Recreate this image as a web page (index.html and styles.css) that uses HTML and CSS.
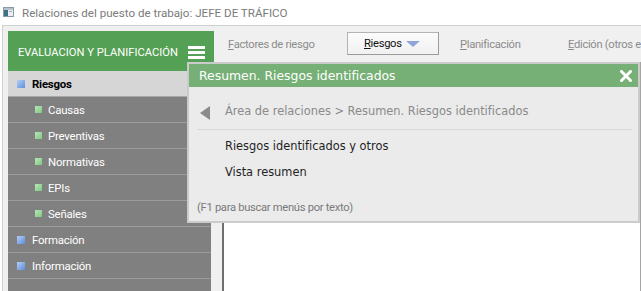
FILE: index.html
```html
<!DOCTYPE html>
<html lang="es">
<head>
<meta charset="utf-8">
<title>Relaciones del puesto de trabajo</title>
<link rel="stylesheet" href="styles.css">
</head>
<body>
<div class="titlebar">
  <svg class="appicon" width="11" height="10" viewBox="0 0 11 10">
    <rect x="0.5" y="0.5" width="10" height="9" fill="#e9eef2" stroke="#8c9aa6"/>
    <rect x="1" y="1" width="9" height="2" fill="#b8c4cc"/>
    <rect x="1" y="3" width="4" height="6" fill="#3f6f82"/>
    <rect x="6" y="4" width="3" height="1" fill="#9fb0bb"/>
  </svg>
  <span class="title">Relaciones del puesto de trabajo: JEFE DE TRÁFICO</span>
</div>
<div class="window">
  <aside class="side">
    <div class="side-head">
      <span class="side-title">EVALUACION Y PLANIFICACIÓN</span>
      <span class="burger"><i></i><i></i><i></i></span>
    </div>
    <ul class="nav">
      <li class="item sel"><span class="sq blue"></span>Riesgos</li>
      <li class="item sub"><span class="sq green"></span>Causas</li>
      <li class="item sub"><span class="sq green"></span>Preventivas</li>
      <li class="item sub"><span class="sq green"></span>Normativas</li>
      <li class="item sub"><span class="sq green"></span>EPIs</li>
      <li class="item sub"><span class="sq green"></span>Señales</li>
      <li class="item"><span class="sq blue"></span>Formación</li>
      <li class="item"><span class="sq blue"></span>Información</li>
      <li class="item filler"></li>
    </ul>
  </aside>
  <div class="main">
    <div class="toolbar">
      <span class="tb-item first"><u>F</u>actores de riesgo</span>
      <span class="tb-button"><span><u>R</u>iesgos</span><i class="tri"></i></span>
      <span class="tb-item plan"><u>P</u>lanificación</span>
      <span class="tb-item last"><u>E</u>dición (otros e</span>
    </div>
    <div class="content"></div>
  </div>
  <div class="popup">
    <div class="pop-head">
      <span>Resumen. Riesgos identificados</span>
      <svg class="close" width="12" height="12" viewBox="0 0 12 12">
        <path d="M1.5 1.5 L10.5 10.5 M10.5 1.5 L1.5 10.5" stroke="#fff" stroke-width="3" stroke-linecap="square"/>
      </svg>
    </div>
    <div class="crumb">
      <i class="back"></i>
      <span>Área de relaciones &gt; Resumen. Riesgos identificados</span>
    </div>
    <div class="sep"></div>
    <ul class="pop-list">
      <li>Riesgos identificados y otros</li>
      <li>Vista resumen</li>
    </ul>
    <div class="hint">(F1 para buscar menús por texto)</div>
  </div>
</div>
</body>
</html>
```

FILE: styles.css
```css
* { box-sizing: border-box; }
html, body { margin: 0; padding: 0; }
body {
  width: 641px;
  height: 291px;
  overflow: hidden;
  background: #fff;
  font-family: Roboto, "Liberation Sans", sans-serif;
}
ul { list-style: none; margin: 0; padding: 0; }

.titlebar {
  height: 25px;
  display: flex;
  align-items: center;
  padding-left: 3px;
  background: #fff;
}
.appicon { display: block; margin-top: -1px; }
.title {
  margin-left: 8px;
  font-size: 11.6px;
  color: #7b7b7b;
}

.window {
  position: relative;
  margin-left: 2px;
  height: 266px;
  border-top: 1px solid #cfcfcf;
  border-left: 1px solid #cfcfcf;
  background: #f0f0f0;
  display: flex;
  padding-left: 5px;
}

.side {
  width: 206px;
  padding-top: 5px;
  display: flex;
  flex-direction: column;
}
.side-head {
  height: 40px;
  background: #54a054;
  display: flex;
  align-items: center;
  justify-content: space-between;
  padding-left: 10px;
  padding-right: 9px;
  color: #fff;
  font-size: 11.2px;
  white-space: nowrap;
}
.side-title { margin-top: 2px; }
.burger {
  display: flex;
  flex-direction: column;
  gap: 2px;
  margin-top: 2px;
}
.burger i {
  display: block;
  width: 17px;
  height: 3px;
  background: #fff;
}
.nav {
  flex: 1;
  width: 203px;
  background: #808080;
  display: flex;
  flex-direction: column;
}
.item {
  height: 26px;
  border-bottom: 1px solid #9c9c9c;
  display: flex;
  align-items: center;
  padding-left: 9px;
  color: #fff;
  font-size: 11.4px;
  letter-spacing: -0.2px;
}
.item.sel {
  background: #d6d6d6;
  color: #000;
  font-weight: 700;
  border-bottom-color: #a8a8a8;
}
.item.sub { padding-left: 27px; }
.item.filler { flex: 1; border-bottom: 0; }
.sq {
  display: inline-block;
  width: 8px;
  height: 8px;
  margin-right: 7px;
}
.sq.blue { background: linear-gradient(135deg, #b3cdf3, #5d8fdc); }
.sq.green {
  width: 7px;
  height: 7px;
  margin-right: 6px;
  background: linear-gradient(135deg, #b8e6b8, #7fc97f);
}

.main {
  flex: 1;
  min-width: 0;
  display: flex;
  flex-direction: column;
}
.toolbar {
  height: 36px;
  display: flex;
  align-items: center;
  font-size: 11.2px;
  letter-spacing: -0.3px;
  color: #8c8c8c;
  white-space: nowrap;
  overflow: hidden;
}
.tb-item.first { width: 133px; padding-left: 14px; flex: none; }
.tb-item.plan { width: 108px; margin-left: 21px; flex: none; }
.tb-item.last { flex: none; }
.tb-button {
  flex: none;
  width: 92px;
  height: 23px;
  margin-top: -1px;
  border: 1px solid #b4b4b4;
  border-right-color: #9c9c9c;
  border-bottom-color: #9c9c9c;
  background: linear-gradient(#fbfbfb, #f1f1f1);
  color: #111;
  display: flex;
  align-items: center;
  padding-left: 16px;
}
.tri {
  display: block;
  width: 0;
  height: 0;
  margin-left: 4px;
  margin-top: 1px;
  border-left: 7px solid transparent;
  border-right: 7px solid transparent;
  border-top: 6px solid #8fa6da;
}
.content {
  flex: 1;
  margin-left: 8px;
  background: #fff;
  border-left: 2px solid #6f6f6f;
  border-right: 1px solid #a5a5a5;
}

.popup {
  position: absolute;
  left: 184px;
  top: 36px;
  width: 453px;
  height: 161px;
  border: 2px solid #cbcbcb;
  background: #ebebeb;
  font-family: "DejaVu Sans", Verdana, sans-serif;
}
.pop-head {
  height: 23px;
  background: #76b076;
  color: #fff;
  font-size: 12.4px;
  display: flex;
  align-items: center;
  justify-content: space-between;
  padding-left: 10px;
  padding-right: 6px;
}
.close { display: block; }
.crumb {
  height: 42px;
  padding-top: 6px;
  padding-left: 11px;
  display: flex;
  align-items: center;
  color: #8a8a8a;
  font-size: 11.4px;
}
.back {
  display: block;
  width: 0;
  height: 0;
  margin-top: 3px;
  border-right: 10px solid #8b8b8b;
  border-top: 7px solid transparent;
  border-bottom: 7px solid transparent;
  margin-right: 15px;
}
.sep {
  height: 1px;
  background: #d9d9d9;
  margin: 0 6px 0 8px;
}
.pop-list {
  margin-top: 3px;
  padding-left: 36px;
  font-size: 11.4px;
  color: #1f1f1f;
}
.pop-list li { height: 26px; line-height: 26px; }
.hint {
  margin-top: 15px;
  padding-left: 8px;
  height: 16px;
  line-height: 16px;
  font-family: Roboto, "Liberation Sans", sans-serif;
  font-size: 11.2px;
  letter-spacing: -0.3px;
  color: #7a7a7a;
}
```
